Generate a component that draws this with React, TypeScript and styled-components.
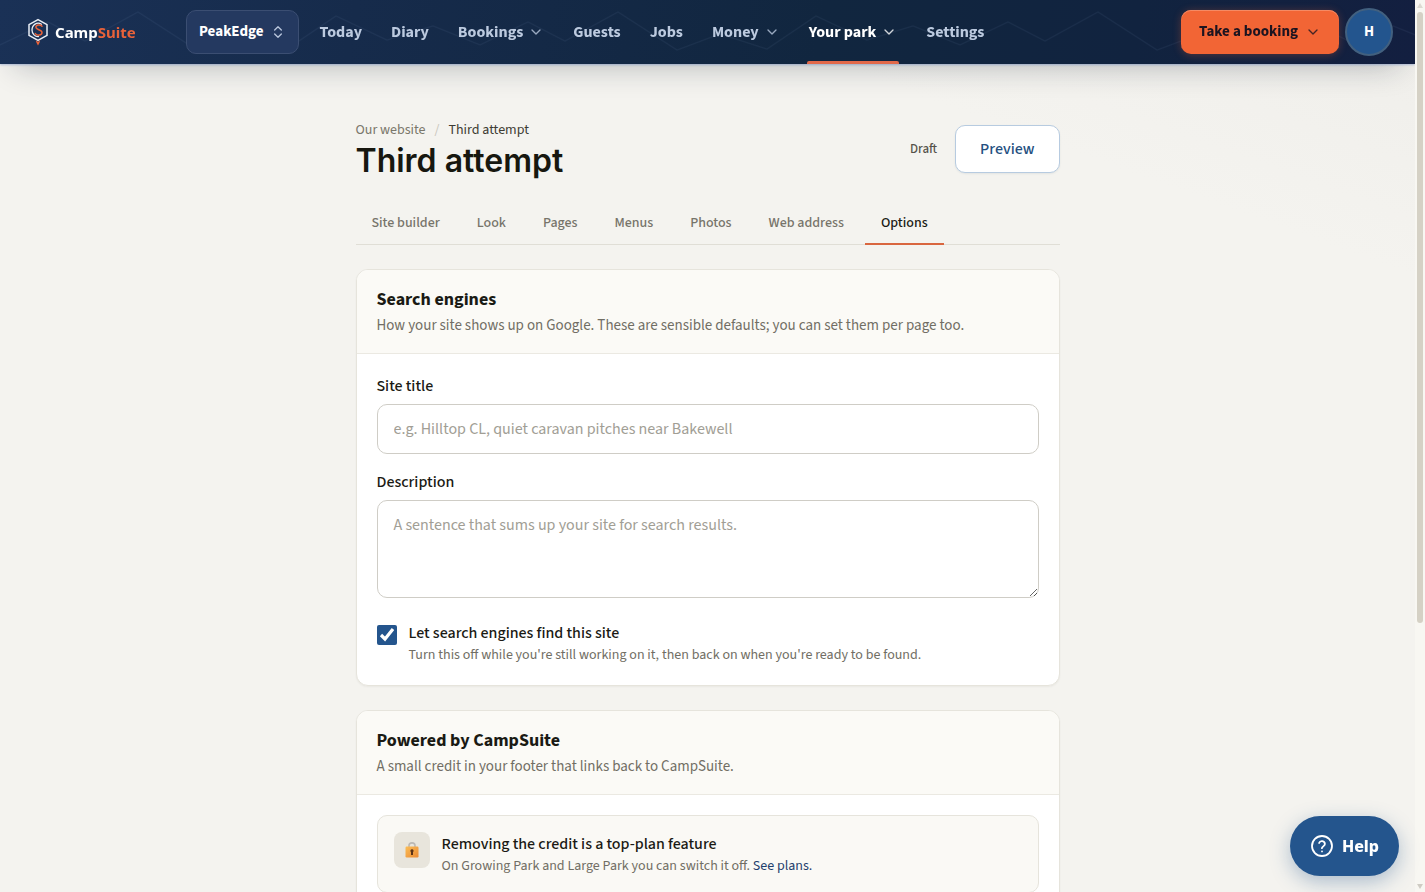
import React from "react";
import styled, { createGlobalStyle, css } from "styled-components";
import { ChevronDown, ChevronsUpDown } from "lucide-react";

const sans = `"Source Sans 3", "Noto Sans CJK SC", "Noto Sans", sans-serif`;

const GlobalStyle = createGlobalStyle`
  *, *::before, *::after { box-sizing: border-box; }
  body { margin: 0; background: #f4f3ef; color: #1a1a14; font-family: ${sans}; }
  button, input, textarea { font-family: inherit; }
  h1, h2, p { margin: 0; }
  a { text-decoration: none; }
`;

const Shell = styled.div`
  display: flex;
  height: 100vh;
`;

const Scroller = styled.div`
  flex: 1;
  min-width: 0;
  overflow-y: auto;
  scrollbar-width: none;
  background: linear-gradient(200deg, #efeeea 0, #f4f3ef 260px);
`;

const Rail = styled.div`
  flex: none;
  width: 10px;
  padding: 3px 2px;
  display: flex;
  flex-direction: column;
  align-items: center;
  gap: 4px;
  background: #f8f7f2;
`;

const Thumb = styled.div`
  width: 6px;
  height: 69%;
  border-radius: 3px;
  background: #d5d1c5;
`;

const RailArrow = styled.div<{ $down?: boolean }>`
  border: 3px solid transparent;
  ${(p) =>
    p.$down
      ? css`
          border-top: 5px solid #cfccc4;
          border-bottom: 0;
          margin-top: auto;
        `
      : css`
          border-bottom: 5px solid #dddad2;
          border-top: 0;
        `}
`;

const Header = styled.header`
  position: sticky;
  top: 0;
  z-index: 2;
  height: 64px;
  padding: 0 22px 0 27px;
  display: flex;
  align-items: center;
  background: linear-gradient(100deg, #1a3156 0%, #162b4b 25%, #11263f 58%, #11233f 80%, #131f40 100%);
  box-shadow: 0 1px 2px rgba(60, 100, 180, 0.35), 0 16px 32px -16px rgba(20, 30, 50, 0.32);
`;

const Ridge = styled.svg`
  position: absolute;
  inset: 0;
  width: 100%;
  height: 100%;
  pointer-events: none;
`;

const Brand = styled.a`
  position: relative;
  width: 159px;
  display: flex;
  align-items: center;
  gap: 6px;
  color: #fff;
  font-family: "Noto Sans", sans-serif;
  font-size: 15px;
  line-height: 24px;
  font-weight: 700;
`;

const BrandAccent = styled.span`
  color: #e8623a;
`;

const ParkSwitch = styled.button`
  position: relative;
  height: 44px;
  padding: 0 12px;
  display: flex;
  align-items: center;
  gap: 6px;
  border: 1px solid #3b4e72;
  border-radius: 10px;
  background: #243960;
  color: #fff;
  font-size: 15px;
  line-height: 20px;
  font-weight: 700;
  svg { color: #b9c6dc; }
`;

const Nav = styled.nav`
  position: relative;
  flex: 1;
  display: flex;
  gap: 1px;
  margin-left: 7px;
`;

const NavItem = styled.a<{ $active?: boolean }>`
  position: relative;
  height: 64px;
  padding: 0 14px;
  display: flex;
  align-items: center;
  gap: 5px;
  color: ${(p) => (p.$active ? "#ffffff" : "#bccadf")};
  font-size: 16px;
  line-height: 20px;
  font-weight: 700;
  white-space: nowrap;
  svg { opacity: 0.8; }
  ${(p) =>
    p.$active &&
    css`
      &::after {
        content: "";
        position: absolute;
        left: 12px;
        right: 12px;
        bottom: 0;
        height: 3px;
        border-radius: 2px 2px 0 0;
        background: #e2694a;
      }
    `}
`;

const BookButton = styled.button`
  position: relative;
  height: 44px;
  padding: 0 18px;
  display: flex;
  align-items: center;
  gap: 7px;
  border: 0;
  border-radius: 10px;
  background: #f26535;
  color: #1c1420;
  font-size: 15px;
  line-height: 20px;
  font-weight: 700;
  white-space: nowrap;
  box-shadow: inset 0 1px 0 #f58a64, 0 1px 8px rgba(242, 101, 53, 0.3);
  svg { opacity: 0.8; }
`;

const Avatar = styled.button`
  position: relative;
  width: 48px;
  height: 48px;
  margin-left: 6px;
  padding: 0;
  border: 2px solid #42607f;
  border-radius: 50%;
  background: #23558e;
  color: #fff;
  font-size: 15px;
  line-height: 20px;
  font-weight: 700;
`;

const Main = styled.main`
  max-width: 704px;
  margin: 0 auto;
  padding: 55px 0 96px;
`;

const PageHead = styled.div`
  display: flex;
  align-items: flex-start;
  justify-content: space-between;
`;

const Crumbs = styled.nav`
  display: flex;
  gap: 9px;
  font-size: 14px;
  line-height: 23px;
  color: #3d3b32;
  a { color: #7a776b; }
  i { color: #c9c6bc; font-style: normal; }
`;

const PageTitle = styled.h1`
  font-family: Inter, sans-serif;
  font-size: 32px;
  line-height: 38px;
  font-weight: 600;
  color: #17170f;
`;

const HeadActions = styled.div`
  display: flex;
  align-items: center;
  gap: 18px;
  padding-top: 6px;
`;

const Status = styled.span`
  font-size: 13px;
  line-height: 20px;
  font-weight: 500;
  color: #55524a;
`;

const PreviewButton = styled.button`
  height: 48px;
  padding: 0 24px;
  border: 1px solid #b7cbe0;
  border-radius: 10px;
  background: #fff;
  color: #24507f;
  font-size: 16px;
  line-height: 24px;
  font-weight: 500;
  box-shadow: 0 1px 2px rgba(30, 60, 90, 0.08);
`;

const Tabs = styled.nav`
  display: flex;
  gap: 5px;
  margin: 20px 0 24px;
  border-bottom: 1px solid #e0ded6;
`;

const Tab = styled.a<{ $active?: boolean }>`
  padding: 13px 16px 9px;
  margin-bottom: -1px;
  border-bottom: 2px solid ${(p) => (p.$active ? "#d9663f" : "transparent")};
  color: ${(p) => (p.$active ? "#1a1a14" : "#77746a")};
  font-size: 14px;
  line-height: 21px;
  font-weight: 500;
  white-space: nowrap;
`;

const Card = styled.section`
  margin-bottom: 24px;
  border: 1px solid #e6e4dc;
  border-radius: 12px;
  background: #fff;
  overflow: hidden;
  box-shadow: 0 1px 2px rgba(40, 40, 20, 0.05);
`;

const CardHead = styled.div`
  padding: 16px 20px;
  border-bottom: 1px solid #ebe9e2;
  background: #fbfaf6;
`;

const CardTitle = styled.h2`
  font-size: 18px;
  line-height: 28px;
  font-weight: 700;
`;

const CardText = styled.p`
  font-size: 15px;
  line-height: 23px;
  color: #716e64;
`;

const CardBody = styled.div`
  padding: 20px;
  display: grid;
  gap: 16px;
`;

const Field = styled.div`
  display: grid;
  gap: 6px;
`;

const Label = styled.label`
  font-size: 16px;
  line-height: 24px;
  font-weight: 500;
`;

const inputStyle = css`
  display: block;
  width: 100%;
  border: 1px solid #cfcdc6;
  border-radius: 10px;
  background: #fff;
  color: #1a1a14;
  font-size: 16px;
  line-height: 24px;
  padding: 12px 16px;
  &::placeholder { color: #a19e95; opacity: 1; }
`;

const TextInput = styled.input`
  ${inputStyle}
  height: 50px;
`;

const TextArea = styled.textarea`
  ${inputStyle}
  height: 98px;
  resize: vertical;
`;

const CheckRow = styled.div`
  display: flex;
  gap: 12px;
  padding-top: 7px;
`;

const Checkbox = styled.input`
  width: 20px;
  height: 20px;
  margin: 4px 0 0;
  accent-color: #24558d;
`;

const ItemTitle = styled.p`
  font-size: 16px;
  line-height: 24px;
  font-weight: 500;
`;

const ItemText = styled.p`
  font-size: 14px;
  line-height: 20px;
  color: #716e64;
  a { color: #1f3f6d; }
`;

const Notice = styled.div`
  display: flex;
  gap: 12px;
  padding: 16px;
  border: 1px solid #e6e4dc;
  border-radius: 10px;
  background: #faf9f5;
`;

const NoticeIcon = styled.div`
  width: 36px;
  height: 36px;
  display: grid;
  place-items: center;
  border-radius: 8px;
  background: #e8e5dc;
`;

const HelpButton = styled.button`
  position: fixed;
  right: 26px;
  bottom: 16px;
  z-index: 3;
  height: 60px;
  padding: 0 20px;
  display: flex;
  align-items: center;
  gap: 8px;
  border: 0;
  border-radius: 30px;
  background: #24558d;
  color: #fff;
  font-family: "Noto Sans", sans-serif;
  font-size: 16px;
  line-height: 24px;
  font-weight: 800;
  box-shadow: 0 6px 20px rgba(36, 85, 141, 0.35);
`;

function RidgeLines() {
  return (
    <Ridge aria-hidden="true">
      <defs>
        <pattern id="ridge" width="480" height="64" patternUnits="userSpaceOnUse">
          <path
            d="M0 45 L48 22 L85 41 L138 12 L197 50 L240 34 L287 49 L336 16 L387 40 L433 26 L480 45"
            fill="none"
            stroke="#8fb0dc"
            strokeOpacity="0.07"
            strokeWidth="1.2"
          />
        </pattern>
      </defs>
      <rect width="100%" height="100%" fill="url(#ridge)" />
    </Ridge>
  );
}

function Logo() {
  return (
    <svg width="22" height="28" viewBox="0 0 22 28" fill="none" aria-hidden="true">
      <path d="M11 1.6 L20 6.6 V17.4 L11 22.4 L2 17.4 V6.6 Z" stroke="#e9eef6" strokeWidth="1.5" strokeLinejoin="round" />
      <path d="M14.5 6.2 C10 3.6 5 6.6 5 12 C5 16 8 18.8 11.5 18.6" stroke="#e9eef6" strokeWidth="1.3" strokeLinecap="round" />
      <path
        d="M15 8.2 C13.4 6.4 8.8 6.6 8.9 9.3 C9 12 15 11.4 15 14.6 C15 17.6 10 17.9 8.3 15.6"
        stroke="#e8623a"
        strokeWidth="1.5"
        strokeLinecap="round"
      />
      <path d="M8.8 22.6 L11 23.8 L13.2 22.6 L12.4 25 L11 27.4 L9.6 25 Z" fill="#e8623a" />
    </svg>
  );
}

function LockIcon() {
  return (
    <svg width="16" height="18" viewBox="0 0 16 18" aria-hidden="true">
      <defs>
        <linearGradient id="lockBody" x1="0" y1="0" x2="1" y2="1">
          <stop offset="0" stopColor="#fbbd55" />
          <stop offset="1" stopColor="#ea8a35" />
        </linearGradient>
      </defs>
      <path d="M5 7 V4.6 C5 1 11 1 11 4.6 V7" fill="none" stroke="#bcb8b4" strokeWidth="1.6" />
      <rect x="1.5" y="5.5" width="13" height="11" rx="1.2" fill="url(#lockBody)" />
      <path d="M8 8.2 a1.7 1.7 0 0 1 1 3 V14 H7 V11.2 a1.7 1.7 0 0 1 1-3 Z" fill="#5b3218" />
    </svg>
  );
}

function HelpIcon() {
  return (
    <svg width="24" height="24" viewBox="0 0 24 24" fill="none" stroke="#fff" strokeWidth="1.8" strokeLinecap="round" strokeLinejoin="round" aria-hidden="true">
      <circle cx="12" cy="12" r="10" />
      <path d="M9.1 9a3 3 0 0 1 5.8 1c0 2-3 2.6-3 4.2" />
      <path d="M12 17.4h.01" />
    </svg>
  );
}

const navItems = [
  { label: "Today" },
  { label: "Diary" },
  { label: "Bookings", menu: true },
  { label: "Guests" },
  { label: "Jobs" },
  { label: "Money", menu: true },
  { label: "Your park", menu: true, active: true },
  { label: "Settings" },
];

const tabs = ["Site builder", "Look", "Pages", "Menus", "Photos", "Web address", "Options"];

export default function App() {
  return (
    <>
      <GlobalStyle />
      <Shell>
        <Scroller>
          <Header>
            <RidgeLines />
            <Brand href="#">
              <Logo />
              <span>
                Camp<BrandAccent>Suite</BrandAccent>
              </span>
            </Brand>
            <ParkSwitch type="button">
              PeakEdge
              <ChevronsUpDown size={16} />
            </ParkSwitch>
            <Nav>
              {navItems.map((item) => (
                <NavItem key={item.label} href="#" $active={item.active}>
                  {item.label}
                  {item.menu && <ChevronDown size={16} />}
                </NavItem>
              ))}
            </Nav>
            <BookButton type="button">
              Take a booking
              <ChevronDown size={16} />
            </BookButton>
            <Avatar type="button">H</Avatar>
          </Header>
          <Main>
            <PageHead>
              <div>
                <Crumbs aria-label="Breadcrumb">
                  <a href="#">Our website</a>
                  <i>/</i>
                  <span>Third attempt</span>
                </Crumbs>
                <PageTitle>Third attempt</PageTitle>
              </div>
              <HeadActions>
                <Status>Draft</Status>
                <PreviewButton type="button">Preview</PreviewButton>
              </HeadActions>
            </PageHead>
            <Tabs>
              {tabs.map((tab) => (
                <Tab key={tab} href="#" $active={tab === "Options"}>
                  {tab}
                </Tab>
              ))}
            </Tabs>
            <Card>
              <CardHead>
                <CardTitle>Search engines</CardTitle>
                <CardText>How your site shows up on Google. These are sensible defaults; you can set them per page too.</CardText>
              </CardHead>
              <CardBody>
                <Field>
                  <Label htmlFor="site-title">Site title</Label>
                  <TextInput id="site-title" placeholder="e.g. Hilltop CL, quiet caravan pitches near Bakewell" />
                </Field>
                <Field>
                  <Label htmlFor="description">Description</Label>
                  <TextArea id="description" placeholder="A sentence that sums up your site for search results." />
                </Field>
                <CheckRow>
                  <Checkbox id="indexable" type="checkbox" defaultChecked />
                  <div>
                    <ItemTitle as="label" htmlFor="indexable">
                      Let search engines find this site
                    </ItemTitle>
                    <ItemText>Turn this off while you're still working on it, then back on when you're ready to be found.</ItemText>
                  </div>
                </CheckRow>
              </CardBody>
            </Card>
            <Card>
              <CardHead>
                <CardTitle>Powered by CampSuite</CardTitle>
                <CardText>A small credit in your footer that links back to CampSuite.</CardText>
              </CardHead>
              <CardBody>
                <Notice>
                  <NoticeIcon>
                    <LockIcon />
                  </NoticeIcon>
                  <div>
                    <ItemTitle>Removing the credit is a top-plan feature</ItemTitle>
                    <ItemText>
                      On Growing Park and Large Park you can switch it off. <a href="#">See plans.</a>
                    </ItemText>
                  </div>
                </Notice>
              </CardBody>
            </Card>
          </Main>
        </Scroller>
        <Rail aria-hidden="true">
          <RailArrow />
          <Thumb />
          <RailArrow $down />
        </Rail>
      </Shell>
      <HelpButton type="button">
        <HelpIcon />
        Help
      </HelpButton>
    </>
  );
}
